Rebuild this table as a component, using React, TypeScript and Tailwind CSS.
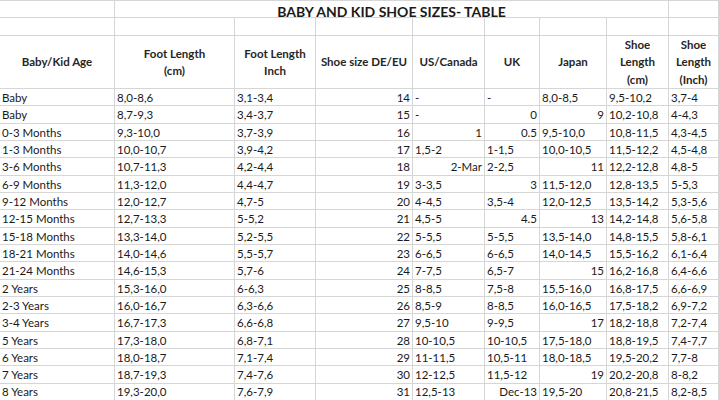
import React from "react";

type Cell = string;
type Row = Cell[];

// "r:" prefix = right aligned (numeric), otherwise left aligned
const rows: Row[] = [
  ["Baby", "8,0-8,6", "3,1-3,4", "r:14", "-", "-", "8,0-8,5", "9,5-10,2", "3,7-4"],
  ["Baby", "8,7-9,3", "3,4-3,7", "r:15", "-", "r:0", "r:9", "10,2-10,8", "4-4,3"],
  ["0-3 Months", "9,3-10,0", "3,7-3,9", "r:16", "r:1", "r:0.5", "9,5-10,0", "10,8-11,5", "4,3-4,5"],
  ["1-3 Months", "10,0-10,7", "3,9-4,2", "r:17", "1,5-2", "1-1,5", "10,0-10,5", "11,5-12,2", "4,5-4,8"],
  ["3-6 Months", "10,7-11,3", "4,2-4,4", "r:18", "r:2-Mar", "2-2,5", "r:11", "12,2-12,8", "4,8-5"],
  ["6-9 Months", "11,3-12,0", "4,4-4,7", "r:19", "3-3,5", "r:3", "11,5-12,0", "12,8-13,5", "5-5,3"],
  ["9-12 Months", "12,0-12,7", "4,7-5", "r:20", "4-4,5", "3,5-4", "12,0-12,5", "13,5-14,2", "5,3-5,6"],
  ["12-15 Months", "12,7-13,3", "5-5,2", "r:21", "4,5-5", "r:4.5", "r:13", "14,2-14,8", "5,6-5,8"],
  ["15-18 Months", "13,3-14,0", "5,2-5,5", "r:22", "5-5,5", "5-5,5", "13,5-14,0", "14,8-15,5", "5,8-6,1"],
  ["18-21 Months", "14,0-14,6", "5,5-5,7", "r:23", "6-6,5", "6-6,5", "14,0-14,5", "15,5-16,2", "6,1-6,4"],
  ["21-24 Months", "14,6-15,3", "5,7-6", "r:24", "7-7,5", "6,5-7", "r:15", "16,2-16,8", "6,4-6,6"],
  ["2 Years", "15,3-16,0", "6-6,3", "r:25", "8-8,5", "7,5-8", "15,5-16,0", "16,8-17,5", "6,6-6,9"],
  ["2-3 Years", "16,0-16,7", "6,3-6,6", "r:26", "8,5-9", "8-8,5", "16,0-16,5", "17,5-18,2", "6,9-7,2"],
  ["3-4 Years", "16,7-17,3", "6,6-6,8", "r:27", "9,5-10", "9-9,5", "r:17", "18,2-18,8", "7,2-7,4"],
  ["5 Years", "17,3-18,0", "6,8-7,1", "r:28", "10-10,5", "10-10,5", "17,5-18,0", "18,8-19,5", "7,4-7,7"],
  ["6 Years", "18,0-18,7", "7,1-7,4", "r:29", "11-11,5", "10,5-11", "18,0-18,5", "19,5-20,2", "7,7-8"],
  ["7 Years", "18,7-19,3", "7,4-7,6", "r:30", "12-12,5", "11,5-12", "r:19", "20,2-20,8", "8-8,2"],
  ["8 Years", "19,3-20,0", "7,6-7,9", "r:31", "12,5-13", "r:Dec-13", "19,5-20", "20,8-21,5", "8,2-8,5"],
];

const headers: string[][] = [
  ["Baby/Kid Age"],
  ["Foot Length", "(cm)"],
  ["Foot Length", "Inch"],
  ["Shoe size DE/EU"],
  ["US/Canada"],
  ["UK"],
  ["Japan"],
  ["Shoe", "Length", "(cm)"],
  ["Shoe", "Length", "(Inch)"],
];

const line = "border-r border-b border-[#d6d6d6]";

export default function App() {
  return (
    <div
      className="w-[719px] h-[400px] overflow-hidden bg-white text-[#1a1a1a]"
      style={{ fontFamily: "Lato, 'Open Sans', sans-serif" }}
    >
      <div className="grid grid-cols-[115px_120px_81px_97px_72px_55px_67px_62px_50px] border-t border-[#d6d6d6]">
        {/* Title row */}
        <div className={`${line} h-[17px]`} />
        <div
          className={`${line} col-span-7 h-[17px] flex items-center justify-center font-bold text-[14px] text-[#1a1a1a] leading-none pt-[5px]`}
        >
          BABY AND KID SHOE SIZES- TABLE
        </div>
        <div className={`${line} h-[17px]`} />

        {/* Empty row */}
        {headers.map((_, i) => (
          <div key={`e${i}`} className={`${line} h-[18px]`} />
        ))}

        {/* Header row */}
        {headers.map((h, i) => (
          <div
            key={`h${i}`}
            className={`${line} h-[53px] flex flex-col items-center justify-center font-bold text-[11.5px] leading-[17.5px] text-[#262626] whitespace-nowrap`}
          >
            {h.map((t, j) => (
              <span key={j}>{t}</span>
            ))}
          </div>
        ))}

        {/* Data rows */}
        {rows.map((r, ri) =>
          r.map((c, ci) => {
            const right = c.startsWith("r:");
            const text = right ? c.slice(2) : c;
            return (
              <div
                key={`${ri}-${ci}`}
                className={`${line} h-[17.33px] flex items-center text-[11.5px] leading-none whitespace-nowrap overflow-visible pt-[1px] ${
                  right ? "justify-end pr-[2px]" : "justify-start pl-[2px]"
                }`}
              >
                {text}
              </div>
            );
          })
        )}
      </div>
    </div>
  );
}
